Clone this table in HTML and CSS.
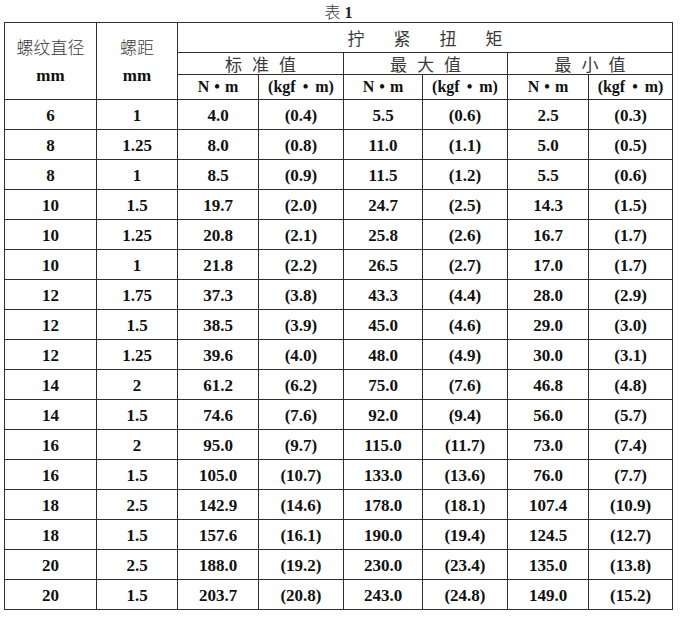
FILE: index.html
```html
<!DOCTYPE html>
<html lang="zh">
<head>
<meta charset="utf-8">
<title>表 1</title>
<link rel="stylesheet" href="styles.css">
</head>
<body>
<div class="page">
  <div class="title"><span class="cjk">表</span> <span class="num">1</span></div>
  <table class="torque">
    <colgroup>
      <col class="c1"><col class="c2"><col class="c3"><col class="c4">
      <col class="c5"><col class="c6"><col class="c7"><col class="c8">
    </colgroup>
    <thead>
      <tr class="h1">
        <th rowspan="3" class="stack"><span class="cjk">螺纹直径</span><br><span class="unit">mm</span></th>
        <th rowspan="3" class="stack"><span class="cjk">螺距</span><br><span class="unit">mm</span></th>
        <th colspan="6" class="cjk wide">拧紧扭矩</th>
      </tr>
      <tr class="h2">
        <th colspan="2" class="cjk mid">标准值</th>
        <th colspan="2" class="cjk mid">最大值</th>
        <th colspan="2" class="cjk mid">最小值</th>
      </tr>
      <tr class="h3">
        <th class="u">N • m</th><th class="u kgf">(kgf • m)</th>
        <th class="u">N • m</th><th class="u kgf">(kgf • m)</th>
        <th class="u">N • m</th><th class="u kgf">(kgf • m)</th>
      </tr>
    </thead>
    <tbody>
      <tr><td>6</td><td>1</td><td>4.0</td><td>(0.4)</td><td>5.5</td><td>(0.6)</td><td>2.5</td><td>(0.3)</td></tr>
      <tr><td>8</td><td>1.25</td><td>8.0</td><td>(0.8)</td><td>11.0</td><td>(1.1)</td><td>5.0</td><td>(0.5)</td></tr>
      <tr><td>8</td><td>1</td><td>8.5</td><td>(0.9)</td><td>11.5</td><td>(1.2)</td><td>5.5</td><td>(0.6)</td></tr>
      <tr><td>10</td><td>1.5</td><td>19.7</td><td>(2.0)</td><td>24.7</td><td>(2.5)</td><td>14.3</td><td>(1.5)</td></tr>
      <tr><td>10</td><td>1.25</td><td>20.8</td><td>(2.1)</td><td>25.8</td><td>(2.6)</td><td>16.7</td><td>(1.7)</td></tr>
      <tr><td>10</td><td>1</td><td>21.8</td><td>(2.2)</td><td>26.5</td><td>(2.7)</td><td>17.0</td><td>(1.7)</td></tr>
      <tr><td>12</td><td>1.75</td><td>37.3</td><td>(3.8)</td><td>43.3</td><td>(4.4)</td><td>28.0</td><td>(2.9)</td></tr>
      <tr><td>12</td><td>1.5</td><td>38.5</td><td>(3.9)</td><td>45.0</td><td>(4.6)</td><td>29.0</td><td>(3.0)</td></tr>
      <tr><td>12</td><td>1.25</td><td>39.6</td><td>(4.0)</td><td>48.0</td><td>(4.9)</td><td>30.0</td><td>(3.1)</td></tr>
      <tr><td>14</td><td>2</td><td>61.2</td><td>(6.2)</td><td>75.0</td><td>(7.6)</td><td>46.8</td><td>(4.8)</td></tr>
      <tr><td>14</td><td>1.5</td><td>74.6</td><td>(7.6)</td><td>92.0</td><td>(9.4)</td><td>56.0</td><td>(5.7)</td></tr>
      <tr><td>16</td><td>2</td><td>95.0</td><td>(9.7)</td><td>115.0</td><td>(11.7)</td><td>73.0</td><td>(7.4)</td></tr>
      <tr><td>16</td><td>1.5</td><td>105.0</td><td>(10.7)</td><td>133.0</td><td>(13.6)</td><td>76.0</td><td>(7.7)</td></tr>
      <tr><td>18</td><td>2.5</td><td>142.9</td><td>(14.6)</td><td>178.0</td><td>(18.1)</td><td>107.4</td><td>(10.9)</td></tr>
      <tr><td>18</td><td>1.5</td><td>157.6</td><td>(16.1)</td><td>190.0</td><td>(19.4)</td><td>124.5</td><td>(12.7)</td></tr>
      <tr><td>20</td><td>2.5</td><td>188.0</td><td>(19.2)</td><td>230.0</td><td>(23.4)</td><td>135.0</td><td>(13.8)</td></tr>
      <tr><td>20</td><td>1.5</td><td>203.7</td><td>(20.8)</td><td>243.0</td><td>(24.8)</td><td>149.0</td><td>(15.2)</td></tr>
    </tbody>
  </table>
</div>
</body>
</html>
```

FILE: styles.css
```css
html, body {
  margin: 0;
  padding: 0;
  background: #ffffff;
}

body {
  font-family: "Liberation Serif", "Noto Sans CJK SC", serif;
  color: #111111;
}

.page {
  padding-left: 4px;
  width: 676px;
}

.title {
  width: 669px;
  height: 22px;
  line-height: 22px;
  text-align: center;
  font-size: 16px;
  color: #222222;
}

.title .num {
  font-family: "Liberation Serif", serif;
  font-weight: bold;
}

.cjk {
  font-family: "Noto Sans CJK SC", sans-serif;
  font-weight: 300;
  color: #3a3a3a;
}

.torque {
  border-collapse: collapse;
  table-layout: fixed;
  width: 669px;
  border: 1px solid #222222;
}

.c1 { width: 92px; }
.c2 { width: 81px; }
.c3 { width: 81px; }
.c4 { width: 85px; }
.c5 { width: 79px; }
.c6 { width: 85px; }
.c7 { width: 81px; }
.c8 { width: 84px; }

.torque th,
.torque td {
  border: 1px solid #2e2e2e;
  padding: 0;
  text-align: center;
  vertical-align: middle;
}

.torque th {
  font-weight: normal;
}

.h1 { height: 30px; }
.h2 { height: 22px; }
.h3 { height: 25px; }

.stack {
  line-height: 27px;
  font-size: 17px;
}

.stack .unit {
  font-family: "Liberation Serif", serif;
  font-weight: bold;
  font-size: 17px;
  color: #111111;
}

.wide {
  font-size: 17px;
  letter-spacing: 29px;
  padding-left: 29px !important;
}

.mid {
  font-size: 17px;
  letter-spacing: 10px;
  padding-left: 10px !important;
  line-height: 20px;
}

.u {
  font-family: "Liberation Serif", serif;
  font-weight: bold !important;
  font-size: 16px;
  word-spacing: 1px;
  color: #111111;
}

.u.kgf {
  word-spacing: 3px;
}

.torque tbody tr {
  height: 30px;
}

.torque td {
  font-family: "Liberation Serif", serif;
  font-weight: bold;
  font-size: 17px;
  color: #111111;
  padding-top: 3px;
}
```
